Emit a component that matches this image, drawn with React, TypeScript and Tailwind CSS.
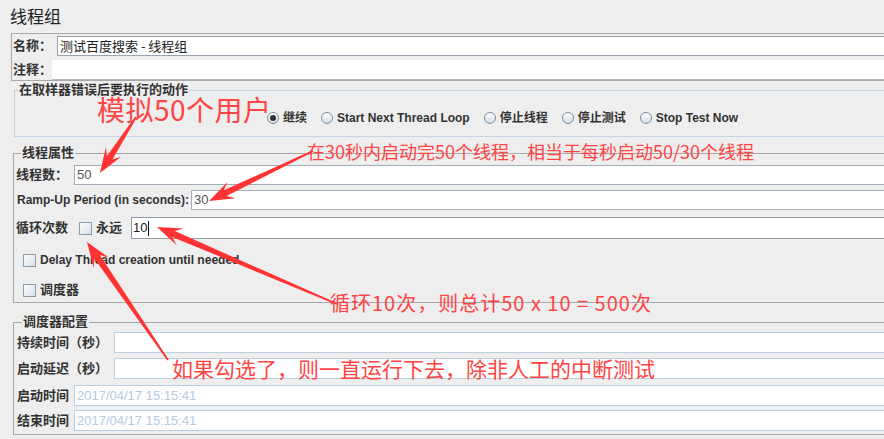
import React from 'react';

const arrowPoints = (x1: number, y1: number, x2: number, y2: number) => {
  const dx = x2 - x1;
  const dy = y2 - y1;
  const len = Math.hypot(dx, dy);
  const ux = dx / len;
  const uy = dy / len;
  const px = -uy;
  const py = ux;
  const L = 25;
  const H = 9;
  const N = 18;
  const pt = (d: number, o: number) =>
    `${(x1 + ux * d + px * o).toFixed(1)},${(y1 + uy * d + py * o).toFixed(1)}`;
  return [pt(0, 0.8), pt(len - N, 3.2), pt(len - L, H), pt(len, 0), pt(len - L, -H), pt(len - N, -3.2), pt(0, -0.8)].join(' ');
};

const arrows = [
  [136, 117, 100, 173],
  [313, 151, 209, 201],
  [337, 304, 157, 227],
  [168, 360, 87, 242],
];

const Radio = ({ label, checked }: { label: string; checked?: boolean }) => (
  <div className="flex items-center gap-[4px]">
    <div className="w-[12px] h-[12px] rounded-full border border-[#7e8f9f] bg-linear-to-b from-white to-[#d2dce6] flex items-center justify-center">
      {checked && <div className="w-[6px] h-[6px] rounded-full bg-[#333]" />}
    </div>
    <span>{label}</span>
  </div>
);

const Check = () => (
  <div className="w-[13px] h-[13px] border border-[#8a9bab] bg-linear-to-br from-white to-[#d6dfe8]" />
);

export default function App() {
  return (
    <div className="relative w-[884px] h-[439px] overflow-hidden bg-[#eeeeee] text-[#333] font-['Liberation_Sans','Noto_Sans_CJK_SC',sans-serif]">
      <div className="pt-[6px] pl-[10px] text-[17px] leading-[20px] text-[#222] font-['Noto_Sans_CJK_SC',sans-serif]">
        线程组
      </div>

      {/* 名称 / 注释 */}
      <div className="mt-[7px] ml-[11px] -mr-[10px] border border-[#a9a9a9] pt-[2px]">
        <div className="flex items-center h-[20px]">
          <div className="w-[45px] pl-[1px] text-[13px] font-bold">名称：</div>
          <div className="flex-1 h-[20px] bg-white border border-[#9aa4ae] border-r-0 pl-[2px] text-[13px] leading-[18px] text-[#222] font-['Noto_Sans_CJK_SC',sans-serif]">
            测试百度搜索 - 线程组
          </div>
        </div>
        <div className="flex items-center h-[20px] mt-[4px]">
          <div className="w-[40px] pl-[1px] text-[13px] font-bold">注释：</div>
          <div className="flex-1 h-[20px] bg-white border-b border-[#b0b8c0]" />
        </div>
      </div>

      {/* 在取样器错误后要执行的动作 */}
      <fieldset className="mt-[1px] ml-[14px] -mr-[10px] border border-[#c3d3e3]">
        <legend className="ml-[3px] px-[1px] text-[13px] leading-[16px] font-bold">在取样器错误后要执行的动作</legend>
        <div className="flex items-center gap-[14px] h-[16px] mt-[12px] mb-[10px] pl-[252px] text-[12px] font-bold">
          <Radio label="继续" checked />
          <Radio label="Start Next Thread Loop" />
          <Radio label="停止线程" />
          <Radio label="停止测试" />
          <Radio label="Stop Test Now" />
        </div>
      </fieldset>

      {/* 线程属性 */}
      <fieldset className="mt-[8px] ml-[13px] -mr-[10px] border border-[#a8a8a8] pl-[2px]">
        <legend className="ml-[5px] px-[1px] text-[13px] leading-[16px] font-bold">线程属性</legend>
        <div className="flex items-center h-[20px] mt-[4px]">
          <div className="w-[58px] text-[13px] font-bold">线程数：</div>
          <div className="flex-1 h-[20px] bg-white border border-[#a3adb7] border-r-0 pl-[2px] text-[13px] leading-[18px] text-[#555]">50</div>
        </div>
        <div className="flex items-center h-[20px] mt-[5px]">
          <div className="w-[175px] pl-[1px] text-[12px] font-bold">Ramp-Up Period (in seconds):</div>
          <div className="flex-1 h-[20px] bg-white border border-[#a3adb7] border-r-0 pl-[2px] text-[13px] leading-[18px] text-[#555]">30</div>
        </div>
        <div className="flex items-center h-[22px] mt-[7px]">
          <div className="w-[63px] text-[13px] font-bold">循环次数</div>
          <Check />
          <div className="ml-[4px] w-[35px] text-[13px] font-bold">永远</div>
          <div className="flex-1 h-[22px] bg-white border border-[#8e9aa6] border-r-0 pl-[1px] text-[13px] leading-[20px] text-[#222] flex items-center">
            10<span className="ml-[1px] h-[15px] border-l border-[#111]" />
          </div>
        </div>
        <div className="flex items-center gap-[4px] h-[16px] mt-[13px] pl-[7px] text-[12px] font-bold">
          <Check />
          <span>Delay Thread creation until needed</span>
        </div>
        <div className="flex items-center gap-[4px] h-[16px] mt-[14px] mb-[4px] pl-[7px] text-[13px] font-bold">
          <Check />
          <span>调度器</span>
        </div>
      </fieldset>

      {/* 调度器配置 */}
      <fieldset className="mt-[11px] ml-[13px] -mr-[10px] border border-[#a8a8a8] pl-[3px]">
        <legend className="ml-[5px] px-[1px] text-[13px] leading-[16px] font-bold">调度器配置</legend>
        <div className="flex items-center h-[21px] mt-[2px]">
          <div className="w-[97px] text-[13px] font-bold">持续时间（秒）</div>
          <div className="flex-1 h-[21px] bg-white border border-[#b9cfe4] border-r-0" />
        </div>
        <div className="flex items-center h-[21px] mt-[5px]">
          <div className="w-[97px] text-[13px] font-bold">启动延迟（秒）</div>
          <div className="flex-1 h-[21px] bg-white border border-[#b9cfe4] border-r-0" />
        </div>
        <div className="flex items-center h-[21px] mt-[6px]">
          <div className="w-[57px] text-[13px] font-bold">启动时间</div>
          <div className="flex-1 h-[21px] bg-white border border-[#b9cfe4] border-r-0 pl-[2px] text-[13px] leading-[19px] text-[#b6cadd]">2017/04/17 15:15:41</div>
        </div>
        <div className="flex items-center h-[21px] mt-[4px] mb-[3px]">
          <div className="w-[57px] text-[13px] font-bold">结束时间</div>
          <div className="flex-1 h-[21px] bg-white border border-[#b9cfe4] border-r-0 pl-[2px] text-[13px] leading-[19px] text-[#b6cadd]">2017/04/17 15:15:41</div>
        </div>
      </fieldset>

      {/* 标注 */}
      <div className="absolute left-[97px] top-[95px] text-[28px] leading-[28px] tracking-[0.5px] text-[#ff4444] font-['Noto_Sans_CJK_SC',sans-serif] whitespace-nowrap">
        模拟50个用户
      </div>
      <div className="absolute left-[307px] top-[141px] text-[18px] leading-[20px] text-[#ff4444] font-['Noto_Sans_CJK_SC',sans-serif] whitespace-nowrap">
        在30秒内启动完50个线程，相当于每秒启动50/30个线程
      </div>
      <div className="absolute left-[330px] top-[292px] text-[20px] leading-[22px] tracking-[1px] text-[#ff4444] font-['Noto_Sans_CJK_SC',sans-serif] whitespace-nowrap">
        循环10次，则总计50 x 10 = 500次
      </div>
      <div className="absolute left-[172px] top-[357px] text-[21px] leading-[22px] text-[#ff4444] font-['Noto_Sans_CJK_SC',sans-serif] whitespace-nowrap">
        如果勾选了，则一直运行下去，除非人工的中断测试
      </div>
      <svg className="absolute inset-0 pointer-events-none" width="884" height="439">
        {arrows.map(([a, b, c, d], i) => (
          <polygon key={i} points={arrowPoints(a, b, c, d)} fill="#ff3333" />
        ))}
      </svg>
    </div>
  );
}
